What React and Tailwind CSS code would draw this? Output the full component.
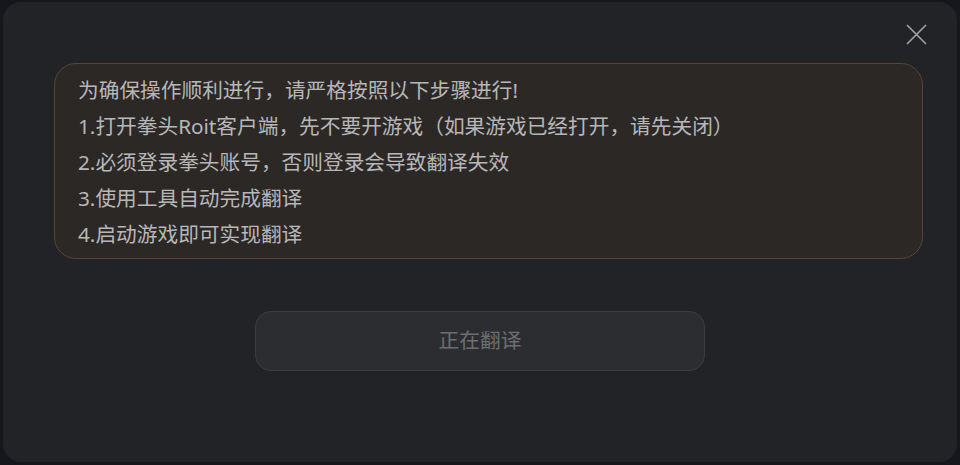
// Translation-in-progress dialog: step notice plus a disabled status button.

const steps = [
  '为确保操作顺利进行，请严格按照以下步骤进行!',
  '1.打开拳头Roit客户端，先不要开游戏（如果游戏已经打开，请先关闭）',
  '2.必须登录拳头账号，否则登录会导致翻译失效',
  '3.使用工具自动完成翻译',
  '4.启动游戏即可实现翻译',
];

function CloseIcon() {
  return (
    <svg width="21" height="21" viewBox="0 0 21 21" fill="none">
      <path d="M1 1L20 20M20 1L1 20" stroke="#a3a3a6" strokeWidth="1.6" />
    </svg>
  );
}

export default function App() {
  return (
    <div className="w-[960px] h-[465px] bg-[#17161d] pt-[2px] pb-[3px] pl-[3px] pr-[3px] font-['Noto_Sans','Noto_Sans_CJK_SC',sans-serif]">
      <div className="h-full rounded-[18px] bg-[#222327] flex flex-col">
        {/* header with close button */}
        <div className="h-[61px] flex justify-end items-start pt-[22px] pr-[30px]">
          <button className="w-[21px] h-[21px] flex items-center justify-center">
            <CloseIcon />
          </button>
        </div>

        {/* notice box */}
        <div className="ml-[51px] mr-[34px] rounded-[22px] border border-[#5a4530] bg-[#2c2825] pl-[23px] pr-6 pt-[8px] pb-[6px]">
          {steps.map((s) => (
            <div key={s} className="text-[20.7px] leading-[36px] text-[#b7b7b9] whitespace-nowrap">
              {s}
            </div>
          ))}
        </div>

        {/* status button */}
        <div className="flex justify-center mt-[52px]">
          <button
            disabled
            className="w-[450px] h-[60px] rounded-[16px] border border-[#3b3c41] bg-[#2c2d31] text-[20.7px] text-[#6c6d70] flex items-center justify-center"
          >
            正在翻译
          </button>
        </div>
      </div>
    </div>
  );
}
